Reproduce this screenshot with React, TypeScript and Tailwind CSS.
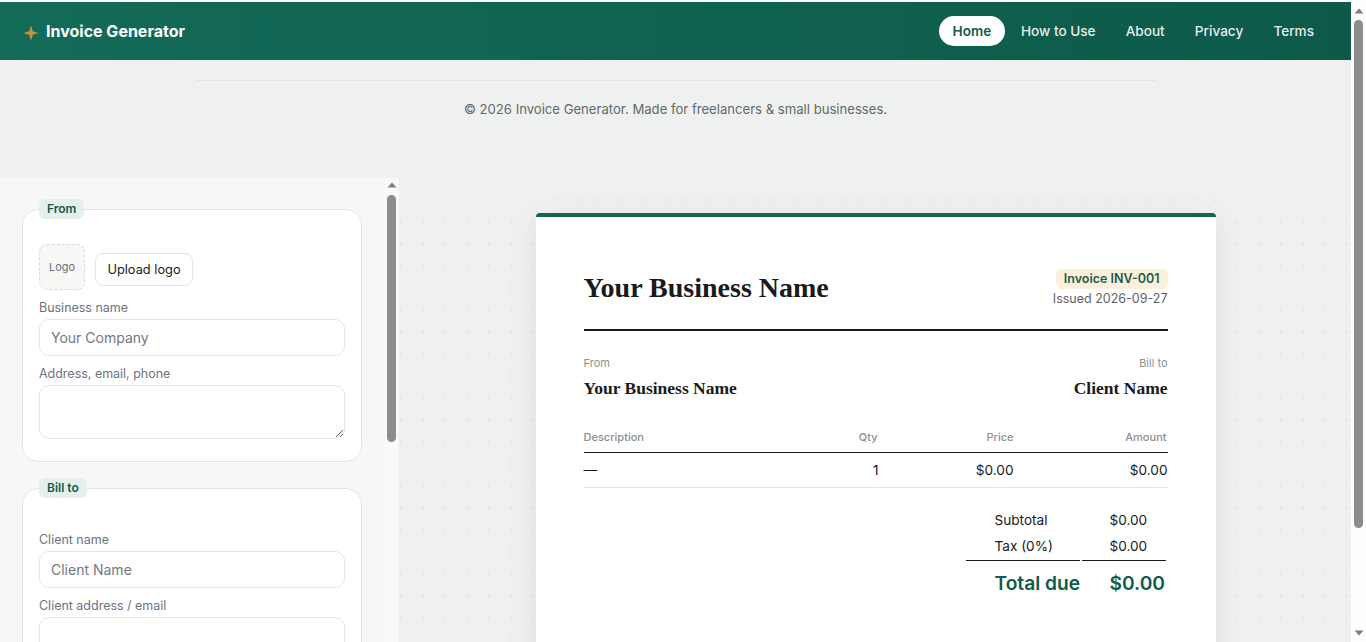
import type { ReactNode } from "react"

const sans = "font-['Inter','Liberation_Sans',sans-serif]"
const serif = "font-['Liberation_Serif',serif]"

function ScrollArrow({ down }: { down?: boolean }) {
  return (
    <svg width="10" height="6" viewBox="0 0 10 6" className="fill-[#7f7f7f]">
      <path d={down ? "M0.5 0.5h9L5 5.5z" : "M5 0.5l4.5 5h-9z"} />
    </svg>
  )
}

function Field({ label, placeholder, area }: { label: string; placeholder?: string; area?: boolean }) {
  return (
    <div className="flex flex-col">
      <label className="pt-px text-[12.48px] leading-[18px] text-[#6b7280] mb-[2px]">{label}</label>
      {area ? (
        <textarea className="h-[54px] w-[306px] rounded-[10px] border border-[#e4e5e2] bg-white block" />
      ) : (
        <input
          placeholder={placeholder}
          className="h-[37px] w-[306px] rounded-[10px] border border-[#e4e5e2] bg-white px-[11px] text-[14px] placeholder:text-[#74787f] outline-none"
        />
      )}
    </div>
  )
}

function Section({ title, children }: { title: string; children: ReactNode }) {
  return (
    <fieldset className="w-[340px] rounded-[16px] border border-[#e4e5e2] bg-white px-4 pb-[22px]">
      <legend className="rounded-[6px] bg-[#e3f0ec] px-2 h-5 text-[12px] font-semibold leading-5 text-[#14594a]">{title}</legend>
      {children}
    </fieldset>
  )
}

function Sidebar() {
  return (
    <aside className="relative w-[400px] shrink-0 flex border-r border-[#eeeeec] bg-[#f7f7f5] overflow-hidden">
      <div className="flex-1 pl-[22px] pt-[21px] flex flex-col gap-[16px]">
        <Section title="From">
          <div className="flex items-end gap-[10px] mt-[25px] mb-[8px]">
            <div className="h-[46px] w-[46px] rounded-[8px] border border-dashed border-[#dcdcd8] bg-[#f7f7f5] flex items-center justify-center text-[11px] text-[#6b7280]">
              Logo
            </div>
            <button className="mb-[4px] h-[33px] w-[98px] rounded-[8px] border border-[#e4e5e2] bg-white text-[12.8px] text-[#1a1a1a]">
              Upload logo
            </button>
          </div>
          <div className="flex flex-col gap-[8px]">
            <Field label="Business name" placeholder="Your Company" />
            <Field label="Address, email, phone" area />
          </div>
        </Section>
        <Section title="Bill to">
          <div className="flex flex-col gap-[8px] mt-[32px]">
            <Field label="Client name" placeholder="Client Name" />
            <Field label="Client address / email" area />
          </div>
        </Section>
      </div>
      <div className="w-[13px] mr-px flex flex-col items-center pt-[4px] bg-[#f9f9f7]">
        <ScrollArrow />
        <div className="mt-[7px] h-[247px] w-[9px] rounded-full bg-[#8c8c8c]" />
      </div>
    </aside>
  )
}

function Invoice() {
  return (
    <div className="h-[600px] w-[680px] shrink-0 rounded-t-[4px] border-t-4 border-[#17654f] bg-white px-12 pt-[52px] shadow-[0_8px_32px_rgba(0,0,0,0.08)]">
      <div className="flex items-start justify-between border-b-2 border-[#1a1a1a] h-[62px]">
        <h1 className={`${serif} text-[28px] font-bold leading-[40px] text-[#1a1a1a] -mt-px`}>Your Business Name</h1>
        <div className="flex flex-col items-end">
          <span className="rounded-[6px] bg-[#faf0dc] px-2 h-5 text-[12.5px] font-semibold leading-5 text-[#1f5a48]">Invoice INV-001</span>
          <span className="text-[12.5px] leading-[19px] text-[#5f6368]">Issued 2026-09-27</span>
        </div>
      </div>
      <div className="flex justify-between mt-[25px]">
        <div>
          <div className="text-[11px] leading-[15px] text-[#8b8f93]">From</div>
          <div className={`${serif} mt-[6px] text-[17.5px] font-bold leading-[22px] text-[#1a1a1a]`}>Your Business Name</div>
        </div>
        <div className="text-right">
          <div className="text-[11px] leading-[15px] text-[#8b8f93]">Bill to</div>
          <div className={`${serif} mt-[6px] text-[17.5px] font-bold leading-[22px] text-[#1a1a1a]`}>Client Name</div>
        </div>
      </div>
      <table className="mt-[29px] w-full border-collapse text-[13.6px] text-[#1a1a1a]">
        <thead>
          <tr className="border-b border-[#1a1a1a] text-[11px] font-medium text-[#8b8f93]">
            <th className="h-[24px] pb-[6px] text-left font-medium">Description</th>
            <th className="w-[100px] pb-[6px] pr-[2px] text-right font-medium">Qty</th>
            <th className="w-[134px] pb-[6px] text-right font-medium">Price</th>
            <th className="w-[154px] pb-[6px] pr-px text-right font-medium">Amount</th>
          </tr>
        </thead>
        <tbody>
          <tr className="h-[35px] border-b border-[#e5e7eb]">
            <td className="pt-[2px]">—</td>
            <td className="pt-[2px] pr-px text-right">1</td>
            <td className="pt-[2px] text-right">$0.00</td>
            <td className="pt-[2px] text-right">$0.00</td>
          </tr>
        </tbody>
      </table>
      <div className="flex justify-end mt-[18px]">
        <table className="table-fixed w-[204px] border-separate border-spacing-[2px] text-[13.6px] text-[#1a1a1a]">
          <tbody>
            <tr className="h-[24px]">
              <td className="w-[114px] pl-[29px] pt-[2px]">Subtotal</td>
              <td className="w-[84px] pl-[28px] pt-[2px]">$0.00</td>
            </tr>
            <tr className="h-[27px]">
              <td className="pl-[29px] pb-px border-b border-[#1a1a1a]">Tax (0%)</td>
              <td className="pl-[28px] pb-px border-b border-[#1a1a1a]">$0.00</td>
            </tr>
            <tr className="h-[40px] text-[19.2px] font-semibold text-[#0f5c4a]">
              <td className="pl-[29px] pt-[2px] whitespace-nowrap">Total due</td>
              <td className="pl-[28px] pt-[2px]">$0.00</td>
            </tr>
          </tbody>
        </table>
      </div>
    </div>
  )
}

export default function App() {
  return (
    <div className={`${sans} h-[642px] overflow-hidden flex flex-col bg-[#fdfbfb]`}>
      <div className="h-[2px] shrink-0" />
      <div className="flex flex-1 min-h-0">
        <div className="flex-1 min-w-0 flex flex-col bg-[#eff1f0]">
          <header className="h-[58px] shrink-0 flex items-center justify-between pl-6 pr-[23px] bg-gradient-to-r from-[#136b58] to-[#0d5a49]">
            <div className="flex items-center gap-[6px] text-[16px] font-bold text-white">
              <svg width="16" height="16" viewBox="0 0 16 16" className="fill-[#c8913a] mt-[4px] -ml-px mr-px">
                <path d="M8 0.5L9.8 6.2 15.5 8 9.8 9.8 8 15.5 6.2 9.8 0.5 8 6.2 6.2z" />
              </svg>
              Invoice Generator
            </div>
            <nav className="flex items-center gap-[2.1px] text-[13.6px] font-medium text-[#e6ecea]">
              <a className="h-[30px] rounded-full bg-white px-[13.5px] leading-[30px] font-semibold text-[#14594a]">Home</a>
              <a className="h-[30px] px-[14px] leading-[30px]">How to Use</a>
              <a className="h-[30px] px-[14px] leading-[30px]">About</a>
              <a className="h-[30px] px-[14px] leading-[30px]">Privacy</a>
              <a className="h-[30px] px-[14px] leading-[30px]">Terms</a>
            </nav>
          </header>
          <footer className="h-[118px] shrink-0 flex flex-col items-center pt-5">
            <div className="w-[960px] border-t border-[#e3e5e4]" />
            <p className="mt-[18px] text-[13.12px] leading-[20px] text-[#5f6b66]">© 2026 Invoice Generator. Made for freelancers &amp; small businesses.</p>
          </footer>
          <main className="flex-1 min-h-0 flex overflow-hidden">
            <Sidebar />
            <section className="flex-1 flex justify-center pt-[35px] bg-[#eff1f0] bg-[radial-gradient(#e1e4e2_1px,transparent_1px)] bg-[length:22px_22px] bg-[position:-10px_-11px]">
              <Invoice />
            </section>
          </main>
        </div>
        <div className="w-[15px] shrink-0 flex flex-col items-center pt-[6px] pb-[6px] bg-[#fdfdfd]">
          <ScrollArrow />
          <div className="mt-[6px] h-[508px] w-[9px] rounded-full bg-[#8c8c8c]" />
          <div className="flex-1" />
          <ScrollArrow down />
        </div>
      </div>
    </div>
  )
}
